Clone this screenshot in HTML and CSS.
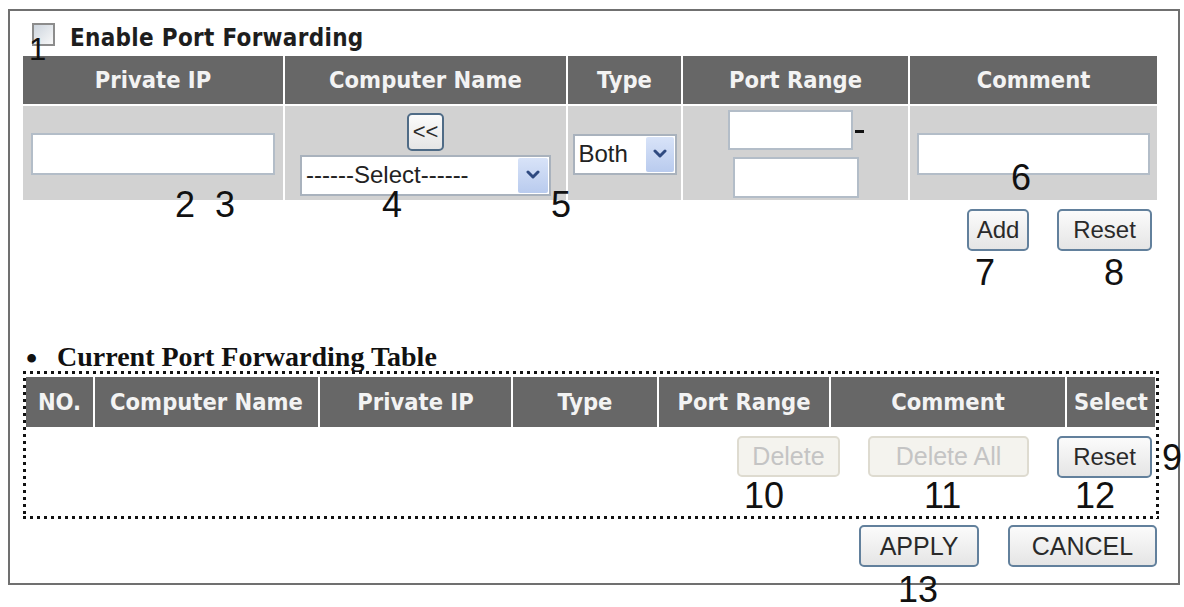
FILE: index.html
```html
<!DOCTYPE html>
<html lang="en">
<head>
    <meta charset="UTF-8">
    <meta name="viewport" content="width=device-width, initial-scale=1.0">
    <title>Port Forwarding</title>
    <link rel="stylesheet" href="styles.css">
</head>
<body>

<form class="panel" id="portForm">
    <label class="enable-row">
        <input type="checkbox" id="enablePf">
        <span class="enable-text">Enable Port Forwarding</span>
    </label>

    <div class="entry-grid">
        <div class="head">Private IP</div>
        <div class="head">Computer Name</div>
        <div class="head">Type</div>
        <div class="head">Port Range</div>
        <div class="head">Comment</div>

        <div class="cell">
            <input type="text" class="text-in ip-in" id="ip">
        </div>
        <div class="cell name-cell">
            <button type="button" class="btn copy-btn">&lt;&lt;</button>
            <div class="dropdown name-select">
                <span class="value">------Select------</span>
                <span class="arrow">
                    <svg width="14" height="10" viewBox="0 0 14 10"><polyline points="2,2 7,7 12,2" fill="none" stroke="#2f4a80" stroke-width="3" stroke-linecap="round" stroke-linejoin="round"/></svg>
                </span>
            </div>
        </div>
        <div class="cell">
            <div class="dropdown type-select">
                <span class="value">Both</span>
                <span class="arrow">
                    <svg width="14" height="10" viewBox="0 0 14 10"><polyline points="2,2 7,7 12,2" fill="none" stroke="#2f4a80" stroke-width="3" stroke-linecap="round" stroke-linejoin="round"/></svg>
                </span>
            </div>
        </div>
        <div class="cell range-cell">
            <div class="range-first">
                <input type="text" class="text-in port-in" id="portFrom">
                <span class="dash"></span>
            </div>
            <input type="text" class="text-in port-in2" id="portTo">
        </div>
        <div class="cell">
            <input type="text" class="text-in comment-in" id="comment">
        </div>
    </div>

    <div class="actions add-actions">
        <button type="button" class="btn add-btn">Add</button>
        <button type="reset" class="btn reset-btn">Reset</button>
    </div>

    <h3 class="list-title"><span class="bullet">&bull;</span>Current Port Forwarding Table</h3>

    <div class="list-box">
        <div class="list-head">
            <div class="head">NO.</div>
            <div class="head">Computer Name</div>
            <div class="head">Private IP</div>
            <div class="head">Type</div>
            <div class="head">Port Range</div>
            <div class="head">Comment</div>
            <div class="head">Select</div>
        </div>
        <div class="actions list-actions">
            <button type="button" class="btn del-btn" disabled>Delete</button>
            <button type="button" class="btn del-all-btn" disabled>Delete All</button>
            <button type="button" class="btn reset-btn">Reset</button>
        </div>
    </div>

    <div class="actions form-actions">
        <button type="submit" class="btn apply-btn">APPLY</button>
        <button type="button" class="btn cancel-btn">CANCEL</button>
    </div>
</form>

<!-- callout numbers -->
<span class="mark m1">1</span>
<span class="mark m2">2</span>
<span class="mark m3">3</span>
<span class="mark m4">4</span>
<span class="mark m5">5</span>
<span class="mark m6">6</span>
<span class="mark m7">7</span>
<span class="mark m8">8</span>
<span class="mark m9">9</span>
<span class="mark m10">10</span>
<span class="mark m11">11</span>
<span class="mark m12">12</span>
<span class="mark m13">13</span>

</body>
</html>
```

FILE: styles.css
```css
body {
    box-sizing: border-box;
    min-height: 607px;
    margin: 0;
    padding: 9px 0 0 8px;
    position: relative;
    background: #fff;
    font-family: "Liberation Sans", Arial, sans-serif;
    color: #222;
}
.panel {
    box-sizing: border-box;
    width: 1172px;
    height: 576px;
    border: 2px solid #707070;
}

/* enable checkbox line */
.enable-row {
    display: flex;
    align-items: flex-start;
    box-sizing: border-box;
    height: 45px;
    padding: 12px 0 0 22px;
}
.enable-row input {
    appearance: none;
    box-sizing: border-box;
    width: 23px;
    height: 23px;
    margin: 0;
    border: 2px solid #8c8c8c;
    background: linear-gradient(135deg, #cdd5de, #f8f8f8);
}
.enable-text {
    margin: 3px 0 0 15px;
    font: bold 24px/25px "DejaVu Sans Condensed", "DejaVu Sans", sans-serif;
    font-stretch: condensed;
    letter-spacing: 0.3px;
    color: #1e1e1e;
}

/* header cells shared by both tables */
.head {
    display: flex;
    align-items: center;
    justify-content: center;
    background: #676767;
    color: #f3f3f3;
    font: bold 23.5px "DejaVu Sans Condensed", "DejaVu Sans", sans-serif;
    font-stretch: condensed;
    white-space: nowrap;
}

/* entry table */
.entry-grid {
    display: grid;
    grid-template-columns: 260px 281px 113px 225px 247px;
    grid-template-rows: 48px 94px;
    gap: 2px;
    width: 1134px;
    margin-left: 13px;
}
.cell {
    display: flex;
    flex-direction: column;
    align-items: center;
    justify-content: center;
    box-sizing: border-box;
    padding-top: 2px;
    background: #d2d2d2;
}
.name-cell {
    gap: 4px;
}
.range-cell {
    gap: 7px;
}
.text-in {
    box-sizing: border-box;
    margin: 0;
    padding: 0 4px;
    border: 2px solid #b3bdc8;
    background: #fff;
    font-size: 22px;
}
.ip-in { width: 244px; height: 42px; }
.comment-in { width: 233px; height: 42px; }
.port-in { width: 125px; height: 40px; }
.port-in2 { width: 126px; height: 41px; }
.range-first {
    display: flex;
    align-items: center;
}
.dash {
    width: 9px;
    height: 3px;
    margin: 2px 0 0 2px;
    background: #111;
}

/* fake select boxes */
.dropdown {
    display: flex;
    box-sizing: border-box;
    border: 2px solid #a9b2bd;
    background: #fff;
    font-size: 24px;
    color: #222;
}
.dropdown .value {
    flex: 1;
    display: flex;
    align-items: center;
    padding-left: 4px;
    white-space: nowrap;
}
.dropdown .arrow {
    display: flex;
    align-items: center;
    justify-content: center;
    margin: 1px;
    border-radius: 2px;
    background: linear-gradient(#d8e3f8, #b9cbee);
}
.name-select { width: 251px; height: 41px; }
.name-select .arrow { width: 30px; }
.type-select { width: 104px; height: 41px; }
.type-select .arrow { width: 28px; }

/* buttons */
.btn {
    box-sizing: border-box;
    padding: 0;
    font-family: "Liberation Sans", Arial, sans-serif;
    font-size: 24px;
    color: #2a2a2a;
    background: linear-gradient(#fbfbfb, #e5e5e5);
    border: 2px solid #62809c;
    border-radius: 5px;
    cursor: pointer;
}
.btn:disabled {
    color: #c4c4c4;
    background: #f4f3ee;
    border-color: #dedbd0;
    cursor: default;
}
.copy-btn { width: 37px; height: 38px; font-size: 22px; border-color: #4f6b86; }
.add-btn { width: 62px; height: 42px; }
.reset-btn { width: 95px; height: 42px; }
.del-btn { width: 103px; height: 41px; font-size: 25px; }
.del-all-btn { width: 161px; height: 41px; font-size: 25px; }
.apply-btn { width: 120px; height: 42px; font-size: 25px; }
.cancel-btn { width: 149px; height: 42px; font-size: 25px; }

.actions {
    display: flex;
    justify-content: flex-end;
    align-items: flex-start;
    gap: 28px;
}
.add-actions {
    padding: 9px 26px 0 0;
}

/* current table */
.list-title {
    margin: 91px 0 0 0;
    height: 29px;
    font: bold 28px/29px "Liberation Serif", "Times New Roman", serif;
    letter-spacing: 0;
    color: #111;
    white-space: nowrap;
}
.bullet {
    display: inline-block;
    width: 31px;
    margin-left: 16px;
    font-size: 32px;
    vertical-align: -3px;
}
.list-box {
    box-sizing: border-box;
    width: 1136px;
    margin-left: 13px;
    padding: 6px 4px 3px 3px;
    background:
        repeating-linear-gradient(90deg, #111 0 3px, transparent 3px 7px) 0 0 / 100% 3px no-repeat,
        repeating-linear-gradient(90deg, #111 0 3px, transparent 3px 7px) 0 100% / 100% 3px no-repeat,
        repeating-linear-gradient(180deg, #111 0 3px, transparent 3px 7px) 0 0 / 3px 100% no-repeat,
        repeating-linear-gradient(180deg, #111 0 3px, transparent 3px 7px) 100% 0 / 3px 100% no-repeat;
}
.list-head {
    display: grid;
    grid-template-columns: 67px 223px 191px 144px 170px 234px 88px;
    column-gap: 2px;
    height: 50px;
}
.list-actions {
    box-sizing: border-box;
    height: 89px;
    padding: 9px 3px 0 0;
}
.form-actions {
    margin-top: 6px;
    padding-right: 21px;
    gap: 29px;
}

/* callout numbers */
.mark {
    position: absolute;
    font: 36px/36px "Liberation Sans", Arial, sans-serif;
    color: #111;
}
.m1 { left: 29px; top: 34px; font-size: 31px; line-height: 31px; }
.m2 { left: 175px; top: 187px; }
.m3 { left: 215px; top: 187px; }
.m4 { left: 382px; top: 187px; }
.m5 { left: 551px; top: 187px; }
.m6 { left: 1011px; top: 160px; }
.m7 { left: 975px; top: 255px; }
.m8 { left: 1104px; top: 255px; }
.m9 { left: 1162px; top: 440px; }
.m10 { left: 744px; top: 478px; }
.m11 { left: 924px; top: 478px; }
.m12 { left: 1075px; top: 478px; }
.m13 { left: 898px; top: 575px; line-height: 30px; }
```
